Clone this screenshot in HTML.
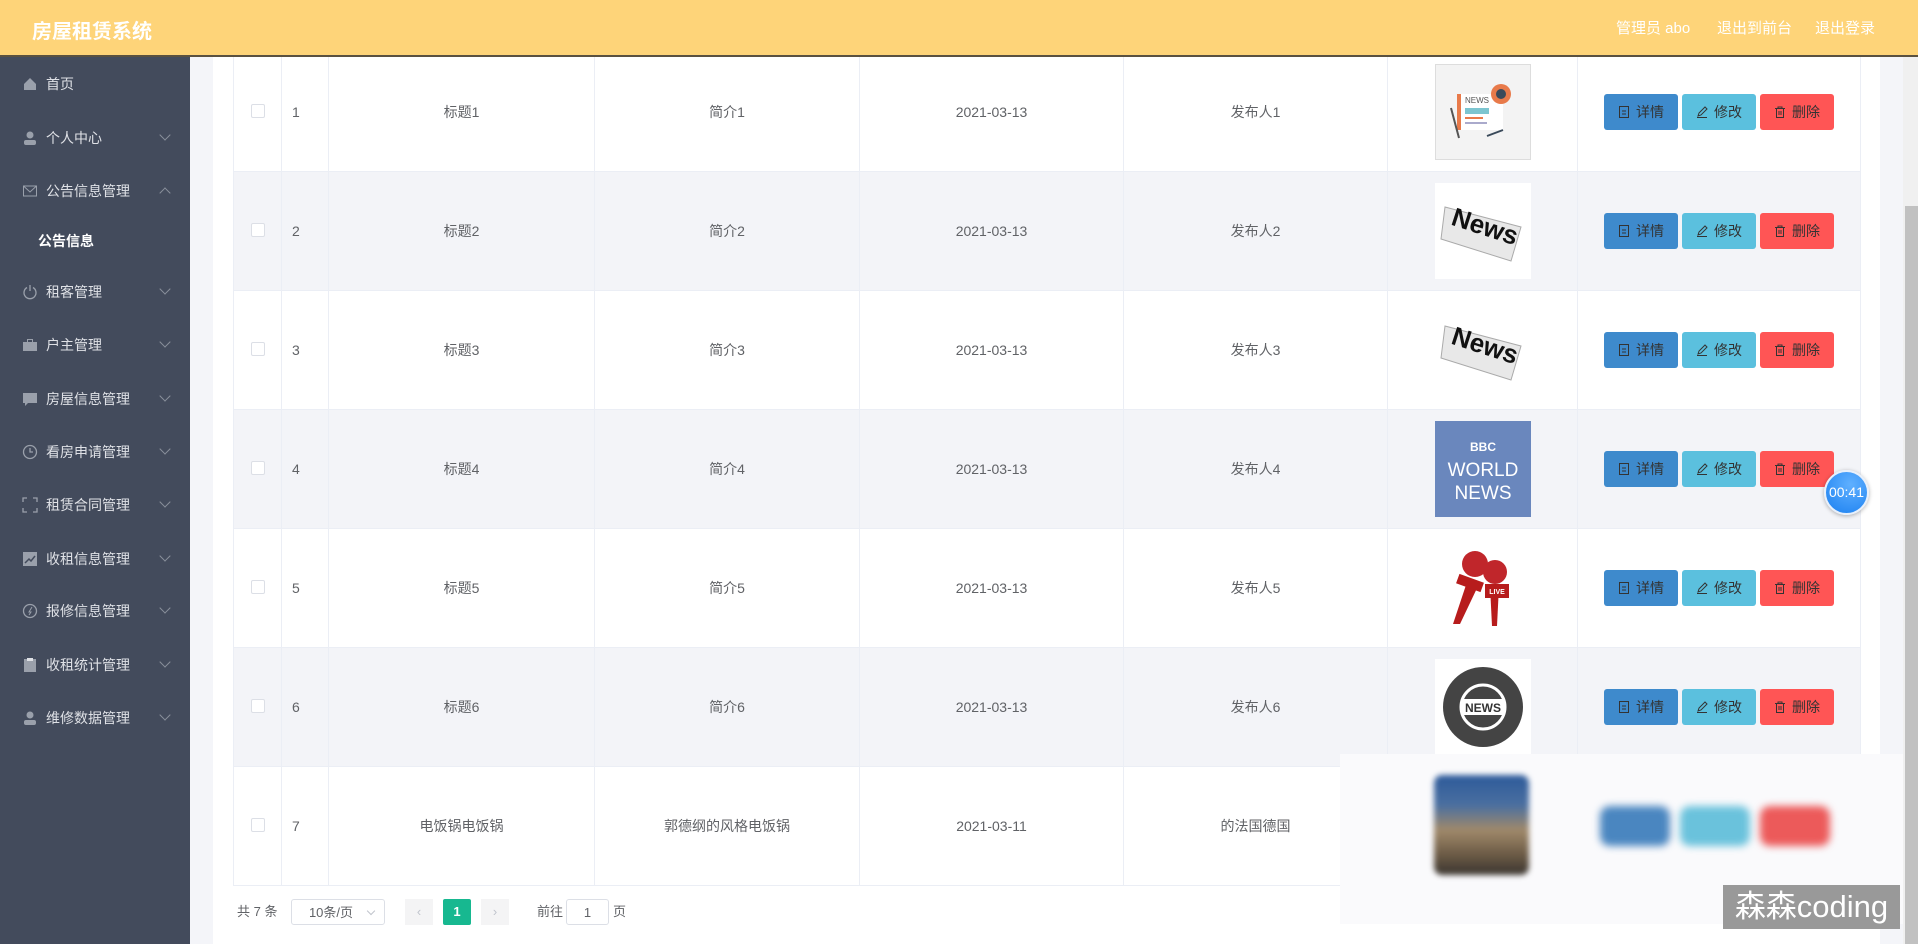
<!DOCTYPE html>
<html><head><meta charset="utf-8">
<style>
*{box-sizing:border-box;margin:0;padding:0}
body{width:1918px;height:944px;overflow:hidden;position:relative;background:#f4f5f9;font-family:"Liberation Sans","Noto Sans CJK SC",sans-serif;font-size:14px;color:#606266}
.hdr{position:absolute;left:0;top:0;width:1918px;height:57px;background:#fed479;border-bottom:2px solid #5a5140;z-index:5}
.hdr .t{position:absolute;left:32px;top:15px;color:#fff;font-weight:bold;font-size:20px}
.hdr .r{position:absolute;top:17px;color:#fff;font-size:15px}
.side{position:absolute;left:0;top:57px;width:190px;height:887px;background:#434b5c}
.mi{position:absolute;left:0;width:190px;height:20px;color:#dfe1e6;font-size:14px}
.mi .ic{position:absolute;left:22px;top:2px;width:16px;height:16px}
.mi .tx{position:absolute;left:46px;top:0}
.mi .ar{position:absolute;left:161px;top:3px;width:8px;height:8px;border-right:1px solid #8a909c;border-bottom:1px solid #8a909c;transform:rotate(45deg)}
.mi .ar.up{transform:rotate(-135deg);top:8px}
.card{position:absolute;left:213px;top:57px;width:1667px;height:887px;background:#fff}
table{position:absolute;left:233px;top:52px;border-collapse:collapse;table-layout:fixed}
td{height:119px;border:1px solid #ebeef5;text-align:center;font-size:14px;color:#606266}
tr:nth-child(even) td{background:#f3f4f8}
td.id{text-align:left;padding-left:10px}
.cb{display:inline-block;width:14px;height:14px;border:1px solid #dcdfe6;border-radius:2px;background:#fff}
.th{width:96px;height:96px;margin:0 auto;display:block}
.btn{display:inline-flex;align-items:center;justify-content:center;gap:6px;width:74px;height:36px;border-radius:3px;color:#333;font-size:14px;margin:0 2px;vertical-align:middle}
.btn svg{width:12px;height:12px}
.b1{background:#3e8acc}.b2{background:#5bc0de}.b3{background:#ff5555}
.pg{position:absolute;top:899px;height:26px;font-size:13px;color:#606266;line-height:26px}
</style></head><body>
<div class="hdr"><div class="t">房屋租赁系统</div>
<div class="r" style="left:1616px">管理员 abo</div><div class="r" style="left:1717px">退出到前台</div><div class="r" style="left:1815px">退出登录</div></div>
<div class="side">
<div class="mi" style="top:17px"><svg class="ic" viewBox="0 0 16 16"><path d="M2 8L8 2l6 6v6H2z" fill="#9aa0ab"/></svg><span class="tx">首页</span></div>
<div class="mi" style="top:71px"><svg class="ic" viewBox="0 0 16 16"><circle cx="8" cy="5" r="3.5" fill="#9aa0ab"/><rect x="2" y="10" width="12" height="5" rx="2" fill="#9aa0ab"/></svg><span class="tx">个人中心</span><i class="ar"></i></div>
<div class="mi" style="top:124px"><svg class="ic" viewBox="0 0 16 16"><rect x="1.5" y="3" width="13" height="10" fill="none" stroke="#9aa0ab"/><path d="M1.5 3l6.5 6 6.5-6" fill="none" stroke="#9aa0ab"/></svg><span class="tx">公告信息管理</span><i class="ar up"></i></div>
<div class="mi" style="top:174px;color:#fff;font-weight:bold"><span class="tx" style="left:38px">公告信息</span></div>
<div class="mi" style="top:225px"><svg class="ic" viewBox="0 0 16 16"><path d="M5 3.5A6 6 0 1 0 11 3.5M8 1v6" fill="none" stroke="#9aa0ab" stroke-width="1.3"/></svg><span class="tx">租客管理</span><i class="ar"></i></div>
<div class="mi" style="top:278px"><svg class="ic" viewBox="0 0 16 16"><rect x="1" y="5" width="14" height="9" fill="#9aa0ab"/><rect x="5.5" y="2.5" width="5" height="3" fill="none" stroke="#9aa0ab"/></svg><span class="tx">户主管理</span><i class="ar"></i></div>
<div class="mi" style="top:332px"><svg class="ic" viewBox="0 0 16 16"><path d="M1 2h14v10H6l-3 3v-3H1z" fill="#9aa0ab"/></svg><span class="tx">房屋信息管理</span><i class="ar"></i></div>
<div class="mi" style="top:385px"><svg class="ic" viewBox="0 0 16 16"><circle cx="8" cy="8" r="6.5" fill="none" stroke="#9aa0ab" stroke-width="1.3"/><path d="M8 4v4h3" fill="none" stroke="#9aa0ab" stroke-width="1.3"/></svg><span class="tx">看房申请管理</span><i class="ar"></i></div>
<div class="mi" style="top:438px"><svg class="ic" viewBox="0 0 16 16"><path d="M1 5V1h4M11 1h4v4M15 11v4h-4M5 15H1v-4" fill="none" stroke="#9aa0ab" stroke-width="1.3"/></svg><span class="tx">租赁合同管理</span><i class="ar"></i></div>
<div class="mi" style="top:492px"><svg class="ic" viewBox="0 0 16 16"><rect x="1" y="1" width="14" height="14" fill="#9aa0ab"/><path d="M3 12l4-4 2 2 4-5" fill="none" stroke="#434b5c" stroke-width="1.5"/></svg><span class="tx">收租信息管理</span><i class="ar"></i></div>
<div class="mi" style="top:544px"><svg class="ic" viewBox="0 0 16 16"><circle cx="8" cy="8" r="6.5" fill="none" stroke="#9aa0ab" stroke-width="1.3"/><path d="M10 4L7 9h2l-2 3" fill="none" stroke="#9aa0ab"/></svg><span class="tx">报修信息管理</span><i class="ar"></i></div>
<div class="mi" style="top:598px"><svg class="ic" viewBox="0 0 16 16"><rect x="2" y="2" width="12" height="13" fill="#9aa0ab"/><rect x="5" y="1" width="6" height="3" fill="#dfe1e6"/></svg><span class="tx">收租统计管理</span><i class="ar"></i></div>
<div class="mi" style="top:651px"><svg class="ic" viewBox="0 0 16 16"><circle cx="8" cy="5" r="3.5" fill="#9aa0ab"/><rect x="2" y="10" width="12" height="5" rx="2" fill="#9aa0ab"/></svg><span class="tx">维修数据管理</span><i class="ar"></i></div>
</div>
<div class="card"></div>
<table>
<colgroup><col style="width:48px"><col style="width:47px"><col style="width:266px"><col style="width:265px"><col style="width:264px"><col style="width:264px"><col style="width:190px"><col style="width:283px"></colgroup>
<tr><td><span class="cb"></span></td><td class="id">1</td><td>标题1</td><td>简介1</td><td>2021-03-13</td><td>发布人1</td><td><svg class="th" viewBox="0 0 96 96"><rect x=".5" y=".5" width="95" height="95" fill="#f3f3f3" stroke="#ddd"/><rect x="26" y="30" width="42" height="36" fill="#fff"/><rect x="22" y="30" width="4" height="36" fill="#e87a4a"/><text x="30" y="39" font-size="8" fill="#555" font-family="Liberation Sans">NEWS</text><rect x="30" y="44" width="24" height="6" fill="#7cc5d0"/><rect x="30" y="53" width="18" height="2" fill="#e87a4a"/><rect x="30" y="58" width="22" height="2" fill="#aac"/><circle cx="66" cy="30" r="10" fill="#e87a4a"/><circle cx="66" cy="30" r="5" fill="#3a4a5a"/><path d="M16 44l8 30" stroke="#555" stroke-width="2"/><path d="M52 72l16-6" stroke="#3a4a5a" stroke-width="2"/></svg></td><td><span class="btn b1"><svg viewBox="0 0 12 12"><rect x="1.5" y=".5" width="9" height="11" fill="none" stroke="#333"/><path d="M4 5h4M4 8h4" stroke="#333"/></svg>详情</span><span class="btn b2"><svg viewBox="0 0 12 12"><path d="M2 10l1-3 6-6 2 2-6 6zM1 11.5h10" fill="none" stroke="#333"/></svg>修改</span><span class="btn b3"><svg viewBox="0 0 12 12"><path d="M1 2.5h10M4 2.5V1h4v1.5M2.5 2.5v9h7v-9M5 5v4M7 5v4" fill="none" stroke="#333"/></svg>删除</span></td></tr>
<tr><td><span class="cb"></span></td><td class="id">2</td><td>标题2</td><td>简介2</td><td>2021-03-13</td><td>发布人2</td><td><svg class="th" viewBox="0 0 96 96"><rect width="96" height="96" fill="#fff"/><path d="M10 24l76 20-10 34-70-22z" fill="#e8e8e8" stroke="#aaa"/><text x="14" y="52" font-size="26" font-weight="bold" fill="#111" transform="rotate(18 48 50)" font-family="Liberation Sans">News</text></svg></td><td><span class="btn b1"><svg viewBox="0 0 12 12"><rect x="1.5" y=".5" width="9" height="11" fill="none" stroke="#333"/><path d="M4 5h4M4 8h4" stroke="#333"/></svg>详情</span><span class="btn b2"><svg viewBox="0 0 12 12"><path d="M2 10l1-3 6-6 2 2-6 6zM1 11.5h10" fill="none" stroke="#333"/></svg>修改</span><span class="btn b3"><svg viewBox="0 0 12 12"><path d="M1 2.5h10M4 2.5V1h4v1.5M2.5 2.5v9h7v-9M5 5v4M7 5v4" fill="none" stroke="#333"/></svg>删除</span></td></tr>
<tr><td><span class="cb"></span></td><td class="id">3</td><td>标题3</td><td>简介3</td><td>2021-03-13</td><td>发布人3</td><td><svg class="th" viewBox="0 0 96 96"><rect width="96" height="96" fill="#fff"/><path d="M10 24l76 20-10 34-70-22z" fill="#e8e8e8" stroke="#aaa"/><text x="14" y="52" font-size="26" font-weight="bold" fill="#111" transform="rotate(18 48 50)" font-family="Liberation Sans">News</text></svg></td><td><span class="btn b1"><svg viewBox="0 0 12 12"><rect x="1.5" y=".5" width="9" height="11" fill="none" stroke="#333"/><path d="M4 5h4M4 8h4" stroke="#333"/></svg>详情</span><span class="btn b2"><svg viewBox="0 0 12 12"><path d="M2 10l1-3 6-6 2 2-6 6zM1 11.5h10" fill="none" stroke="#333"/></svg>修改</span><span class="btn b3"><svg viewBox="0 0 12 12"><path d="M1 2.5h10M4 2.5V1h4v1.5M2.5 2.5v9h7v-9M5 5v4M7 5v4" fill="none" stroke="#333"/></svg>删除</span></td></tr>
<tr><td><span class="cb"></span></td><td class="id">4</td><td>标题4</td><td>简介4</td><td>2021-03-13</td><td>发布人4</td><td><svg class="th" viewBox="0 0 96 96"><rect width="96" height="96" fill="#6a87bd"/><text x="48" y="30" text-anchor="middle" font-size="12" fill="#fff" font-family="Liberation Sans" font-weight="bold">BBC</text><text x="48" y="55" text-anchor="middle" font-size="19" fill="#fff" font-family="Liberation Sans">WORLD</text><text x="48" y="78" text-anchor="middle" font-size="19" fill="#fff" font-family="Liberation Sans">NEWS</text></svg></td><td><span class="btn b1"><svg viewBox="0 0 12 12"><rect x="1.5" y=".5" width="9" height="11" fill="none" stroke="#333"/><path d="M4 5h4M4 8h4" stroke="#333"/></svg>详情</span><span class="btn b2"><svg viewBox="0 0 12 12"><path d="M2 10l1-3 6-6 2 2-6 6zM1 11.5h10" fill="none" stroke="#333"/></svg>修改</span><span class="btn b3"><svg viewBox="0 0 12 12"><path d="M1 2.5h10M4 2.5V1h4v1.5M2.5 2.5v9h7v-9M5 5v4M7 5v4" fill="none" stroke="#333"/></svg>删除</span></td></tr>
<tr><td><span class="cb"></span></td><td class="id">5</td><td>标题5</td><td>简介5</td><td>2021-03-13</td><td>发布人5</td><td><svg class="th" viewBox="0 0 96 96"><rect width="96" height="96" fill="#fff"/><circle cx="40" cy="24" r="13" fill="#c0262b"/><circle cx="60" cy="32" r="12" fill="#c0262b"/><path d="M32 42l-14 42h7l19-40z" fill="#b71c1c"/><path d="M55 46h9l-2 40h-5z" fill="#b71c1c"/><rect x="22" y="38" width="26" height="10" fill="#b71c1c" transform="rotate(20 35 43)"/><rect x="50" y="44" width="24" height="14" fill="#b71c1c"/><text x="62" y="54" text-anchor="middle" font-size="7" font-weight="bold" fill="#fff" font-family="Liberation Sans">LIVE</text></svg></td><td><span class="btn b1"><svg viewBox="0 0 12 12"><rect x="1.5" y=".5" width="9" height="11" fill="none" stroke="#333"/><path d="M4 5h4M4 8h4" stroke="#333"/></svg>详情</span><span class="btn b2"><svg viewBox="0 0 12 12"><path d="M2 10l1-3 6-6 2 2-6 6zM1 11.5h10" fill="none" stroke="#333"/></svg>修改</span><span class="btn b3"><svg viewBox="0 0 12 12"><path d="M1 2.5h10M4 2.5V1h4v1.5M2.5 2.5v9h7v-9M5 5v4M7 5v4" fill="none" stroke="#333"/></svg>删除</span></td></tr>
<tr><td><span class="cb"></span></td><td class="id">6</td><td>标题6</td><td>简介6</td><td>2021-03-13</td><td>发布人6</td><td><svg class="th" viewBox="0 0 96 96"><rect width="96" height="96" fill="#fff"/><circle cx="48" cy="48" r="40" fill="#444"/><circle cx="48" cy="48" r="22" fill="none" stroke="#fff" stroke-width="3"/><rect x="26" y="40" width="44" height="16" fill="#fff"/><text x="48" y="53" text-anchor="middle" font-size="12" font-weight="bold" fill="#333" font-family="Liberation Sans">NEWS</text></svg></td><td><span class="btn b1"><svg viewBox="0 0 12 12"><rect x="1.5" y=".5" width="9" height="11" fill="none" stroke="#333"/><path d="M4 5h4M4 8h4" stroke="#333"/></svg>详情</span><span class="btn b2"><svg viewBox="0 0 12 12"><path d="M2 10l1-3 6-6 2 2-6 6zM1 11.5h10" fill="none" stroke="#333"/></svg>修改</span><span class="btn b3"><svg viewBox="0 0 12 12"><path d="M1 2.5h10M4 2.5V1h4v1.5M2.5 2.5v9h7v-9M5 5v4M7 5v4" fill="none" stroke="#333"/></svg>删除</span></td></tr>
<tr><td><span class="cb"></span></td><td class="id">7</td><td>电饭锅电饭锅</td><td>郭德纲的风格电饭锅</td><td>2021-03-11</td><td>的法国德国</td><td></td><td></td></tr>
</table>
<div style="position:absolute;left:1340px;top:754px;width:563px;height:170px;background:#fafafc"></div>
<div style="position:absolute;left:1434px;top:775px;width:95px;height:100px;border-radius:8px;background:linear-gradient(#2d5a9a 0%,#4a6fa0 30%,#a0896a 55%,#6b5a45 80%,#3a3530 100%);filter:blur(3px)"></div>
<div style="position:absolute;left:1600px;top:806px;width:70px;height:40px;border-radius:10px;background:#4a86c0;filter:blur(4px)"></div>
<div style="position:absolute;left:1680px;top:806px;width:70px;height:40px;border-radius:10px;background:#6ac2dc;filter:blur(4px)"></div>
<div style="position:absolute;left:1760px;top:806px;width:70px;height:40px;border-radius:10px;background:#ec5a5a;filter:blur(4px)"></div>
<div class="pg" style="left:237px">共 7 条</div>
<div class="pg" style="left:291px;width:94px;border:1px solid #dcdfe6;border-radius:3px;text-align:center;padding-right:14px">10条/页<span style="position:absolute;right:10px;top:8px;width:6px;height:6px;border-right:1px solid #c0c4cc;border-bottom:1px solid #c0c4cc;transform:rotate(45deg)"></span></div>
<div class="pg" style="left:405px;width:28px;background:#f4f4f5;text-align:center;color:#c0c4cc">‹</div>
<div class="pg" style="left:443px;width:28px;background:#17b890;text-align:center;color:#fff;font-weight:bold;border-radius:2px">1</div>
<div class="pg" style="left:481px;width:28px;background:#f4f4f5;text-align:center;color:#c0c4cc">›</div>
<div class="pg" style="left:537px">前往</div>
<div class="pg" style="left:566px;width:43px;border:1px solid #dcdfe6;border-radius:3px;text-align:center">1</div>
<div class="pg" style="left:613px">页</div>
<div style="position:absolute;left:1723px;top:885px;width:177px;height:44px;background:#999;color:#fff;font-size:31px;line-height:44px;text-align:center;font-family:'Liberation Sans','Noto Sans CJK SC',sans-serif">森森coding</div>
<div style="position:absolute;left:1824px;top:470px;width:45px;height:45px;border-radius:50%;background:radial-gradient(circle at 60% 30%,#5fb0ff,#1a7ff0);border:2px solid #e8f0fb;color:#fff;font-size:14px;line-height:41px;text-align:center;box-shadow:0 1px 4px rgba(0,0,0,.3)">00:41</div>
<div style="position:absolute;left:1903px;top:57px;width:15px;height:887px;background:#f0f0f0"></div>
<div style="position:absolute;left:1905px;top:206px;width:13px;height:738px;background:#c1c1c1"></div>
</body></html>
